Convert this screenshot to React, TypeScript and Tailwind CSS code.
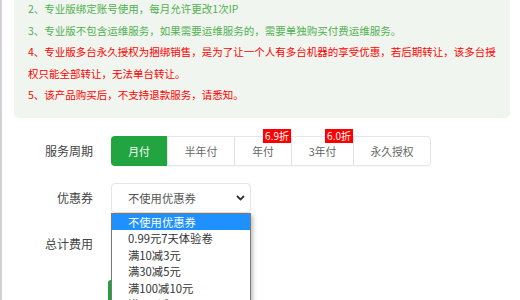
import React from 'react'

const font = { fontFamily: '"Noto Sans CJK SC", "Noto Sans", sans-serif' }

const notices = [
  { text: '2、专业版绑定账号使用，每月允许更改1次IP', red: false },
  { text: '3、专业版不包含运维服务，如果需要运维服务的，需要单独购买付费运维服务。', red: false },
  { text: '4、专业版多台永久授权为捆绑销售，是为了让一个人有多台机器的享受优惠，若后期转让，该多台授', red: true },
  { text: '权只能全部转让，无法单台转让。', red: true },
  { text: '5、该产品购买后，不支持退款服务，请悉知。', red: true },
]

const periods = [
  { label: '月付', w: 'w-[56px]' },
  { label: '半年付', w: 'w-[67px]' },
  { label: '年付', w: 'w-[57px]', badge: '6.9折' },
  { label: '3年付', w: 'w-[62px]', badge: '6.0折' },
  { label: '永久授权', w: 'w-[77px]' },
]

const coupons = ['不使用优惠券', '0.99元7天体验卷', '满10减3元', '满30减5元', '满100减10元', '满200减20元', '满500减50元']

export default function App() {
  return (
    <div className="relative w-[520px] h-[300px] overflow-hidden bg-white border-l-2 border-[#d2d2d2]" style={font}>
      {/* notice box */}
      <div className="ml-[12px] w-[496px] -mt-[12px] pt-[10px] pb-[12px] pl-[14px] bg-[#f0f6ef] rounded-[5px]">
        {notices.map((n, i) => (
          <div
            key={i}
            className={`text-[10.5px] leading-[21.6px] whitespace-nowrap ${n.red ? 'text-[#ff0000]' : 'text-[#52b052]'}`}
          >
            {n.text}
          </div>
        ))}
      </div>

      {/* service period */}
      <div className="flex items-center mt-[18px]">
        <div className="w-[91px] text-right text-[12px] text-[#444]">服务周期</div>
        <div className="ml-[18px] flex h-[30px] border border-[#e6e6e6] rounded-[4px] shadow-[0_1px_2px_rgba(0,0,0,0.04)]">
          {periods.map((p, i) => (
            <div
              key={p.label}
              className={`relative ${p.w} flex items-center justify-center text-[10.8px] ${
                i === 0
                  ? 'bg-[#22a441] text-white rounded-l-[4px] -my-px -ml-px'
                  : 'text-[#666] border-l border-[#e2e2e2]'
              }`}
            >
              {p.label}
              {p.badge && (
                <span className="absolute right-0 -top-[8px] h-[14px] px-[2px] bg-[#ff0000] text-white text-[10px] leading-[14px]">
                  {p.badge}
                </span>
              )}
            </div>
          ))}
        </div>
      </div>

      {/* coupon */}
      <div className="flex items-center mt-[17px]">
        <div className="w-[91px] text-right text-[12px] text-[#444]">优惠券</div>
        <div className="relative ml-[18px] w-[140px] h-[30px] border border-[#e4e4e4] rounded-[4px] flex items-center justify-between pl-[16px] pr-[4px] text-[11.3px] text-[#555]">
          <span>不使用优惠券</span>
          <svg width="9" height="6" viewBox="0 0 9 6" className="mr-[1px]">
            <polyline points="1,1 4.5,4.5 8,1" fill="none" stroke="#333" strokeWidth="1.8" />
          </svg>
          <div className="absolute z-10 left-[-1px] top-[29px] w-[140px] bg-white border border-[#7a7a7a] shadow-[2px_2px_4px_rgba(0,0,0,0.25)]">
            {coupons.map((c, i) => (
              <div
                key={c}
                className={`h-[16.4px] leading-[16.4px] pl-[16px] text-[11.3px] whitespace-nowrap ${
                  i === 0 ? 'bg-[#1e90ff] text-white' : 'text-[#333]'
                }`}
              >
                {c}
              </div>
            ))}
          </div>
        </div>
      </div>

      {/* total */}
      <div className="flex items-center mt-[16px] h-[30px]">
        <div className="w-[91px] text-right text-[12px] text-[#444]">总计费用</div>
      </div>

      <div className="mt-[21px] ml-[106px] w-[120px] h-[36px] bg-[#22a441] rounded-[3px]" />
    </div>
  )
}
